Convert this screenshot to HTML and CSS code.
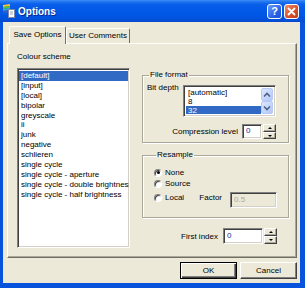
FILE: index.html
```html
<!DOCTYPE html>
<html lang="en">
<head>
    <meta charset="UTF-8">
    <title>Options</title>
    <link rel="stylesheet" href="styles.css">
</head>
<body>
    <div class="window">
        <!-- Заголовок окна -->
        <div class="titlebar">
            <svg class="app-icon" viewBox="0 0 12 14" width="12" height="14">
                <path d="M0 1 L7 0 L7 2 L0 3 Z" fill="#f2c531"/>
                <path d="M0 3 L7 2 L7 4 L0 5 Z" fill="#5cc13a"/>
                <path d="M0 5 L7 4 L7 6 L0 7 Z" fill="#33a3e0"/>
                <path d="M0 7 L5 6.3 L5 9 L0 9.5 Z" fill="#2a5fc8"/>
                <rect x="5.5" y="5.5" width="6" height="8" fill="#fff" stroke="#7a8aa8"/>
                <path d="M7 8 H10 M7 10 H10" stroke="#9aa6c0"/>
            </svg>
            <span class="title">Options</span>
            <span class="tbtn help">?</span>
            <span class="tbtn close">
                <svg viewBox="0 0 13 13" width="13" height="13">
                    <path d="M3.5 3.5 L9.5 9.5 M9.5 3.5 L3.5 9.5" stroke="#fff" stroke-width="1.8" stroke-linecap="round"/>
                </svg>
            </span>
        </div>

        <div class="client">
            <div class="tabs">
                <div class="tab active">Save Options</div>
                <div class="tab second">User Comments</div>
            </div>

            <div class="panel">
                <!-- Левая колонка: список схем -->
                <div class="col-left">
                    <div class="label">Colour scheme</div>
                    <div class="listbox schemes">
                        <div class="item selected">[default]</div>
                        <div class="item">[input]</div>
                        <div class="item">[local]</div>
                        <div class="item">bipolar</div>
                        <div class="item">greyscale</div>
                        <div class="item">ii</div>
                        <div class="item">junk</div>
                        <div class="item">negative</div>
                        <div class="item">schlieren</div>
                        <div class="item">single cycle</div>
                        <div class="item">single cycle - aperture</div>
                        <div class="item">single cycle - double brightness</div>
                        <div class="item">single cycle - half brightness</div>
                    </div>
                </div>

                <!-- Правая колонка -->
                <div class="col-right">
                    <fieldset class="group file-format">
                        <legend>File format</legend>
                        <div class="bit-row">
                            <span class="bit-label">Bit depth</span>
                            <div class="listbox bits">
                                <div class="bit-items">
                                    <div class="bit">[automatic]</div>
                                    <div class="bit">8</div>
                                    <div class="bit selected">32</div>
                                    <div class="bit">64</div>
                                </div>
                                <div class="vscroll">
                                    <span class="sb up">
                                        <svg viewBox="0 0 8 6" width="8" height="6"><path d="M1 4.5 L4 1.5 L7 4.5" fill="none" stroke="#4d6185" stroke-width="1.6"/></svg>
                                    </span>
                                    <span class="sb down">
                                        <svg viewBox="0 0 8 6" width="8" height="6"><path d="M1 1.5 L4 4.5 L7 1.5" fill="none" stroke="#4d6185" stroke-width="1.6"/></svg>
                                    </span>
                                </div>
                            </div>
                        </div>
                        <div class="spin-row comp-row">
                            <span>Compression level</span>
                            <span class="edit comp-edit">0</span>
                            <span class="spin-btns"><i class="spin-up"></i><i class="spin-down"></i></span>
                        </div>
                    </fieldset>

                    <fieldset class="group resample">
                        <legend>Resample</legend>
                        <div class="radio-row first">
                            <span class="radio checked"></span><span>None</span>
                        </div>
                        <div class="radio-row">
                            <span class="radio"></span><span>Source</span>
                        </div>
                        <div class="radio-row local">
                            <span class="radio"></span><span>Local</span>
                            <span class="factor-label">Factor</span>
                            <span class="edit factor-edit">0.5</span>
                        </div>
                    </fieldset>

                    <div class="spin-row first-row">
                        <span>First index</span>
                        <span class="edit first-edit">0</span>
                        <span class="spin-btns tall"><i class="spin-up"></i><i class="spin-down"></i></span>
                    </div>
                </div>
            </div>

            <div class="buttons">
                <button class="btn default">OK</button>
                <button class="btn">Cancel</button>
            </div>
        </div>
    </div>
</body>
</html>
```

FILE: styles.css
```css
/* Основные стили */
* {
    box-sizing: border-box;
}
body {
    margin: 0;
    background: #fff;
    font-family: "Liberation Sans", Arial, sans-serif;
    font-size: 8px;
    color: #000;
}
.window {
    width: 305px;
    height: 288px;
    background: #0853dc;
    display: flex;
    flex-direction: column;
}

/* Заголовок */
.titlebar {
    height: 22px;
    flex: none;
    display: flex;
    align-items: center;
    padding: 0 6px 0 3px;
    background: linear-gradient(#3d8ef7 0, #1f72f0 2px, #0a60e9 4px, #0359e8 9px, #0056e5 15px, #0051dd 19px, #0849cc 22px);
}
.app-icon {
    margin-right: 3px;
    flex: none;
}
.title {
    flex: 1;
    font-weight: bold;
    font-size: 10px;
    color: #fff;
    text-shadow: 1px 1px 0 #0b2a8a;
}
.tbtn {
    width: 15px;
    height: 15px;
    border: 1px solid #fff;
    border-radius: 3px;
    display: flex;
    align-items: center;
    justify-content: center;
    color: #fff;
    font-weight: bold;
    font-size: 11px;
}
.tbtn.help {
    background: linear-gradient(135deg, #6a9cfb, #2a62e8 60%, #1d4fd6);
    margin-right: 2px;
}
.tbtn.close {
    background: linear-gradient(135deg, #ee8d6a, #d9522c 55%, #bf3b18);
}

/* Клиентская область */
.client {
    flex: 1;
    margin: 0 5px 5px 3px;
    background: #ece9d8;
    padding: 4px 3px 4px 4px;
    display: flex;
    flex-direction: column;
}
.tabs {
    height: 17px;
    flex: none;
    display: flex;
    align-items: flex-end;
    padding-left: 2px;
}
.tab {
    height: 15px;
    line-height: 13px;
    text-align: center;
    border: 1px solid;
    border-bottom: none;
    border-color: #fff #716f64 transparent #fff;
    border-radius: 2px 2px 0 0;
}
.tab.active {
    width: 57px;
    height: 18px;
    line-height: 16px;
    margin-bottom: -1px;
    background: #ece9d8;
    position: relative;
    z-index: 1;
}
.tab.second {
    width: 64px;
}

.panel {
    height: 215px;
    flex: none;
    border: 1px solid;
    border-color: #fff #716f64 #716f64 #fff;
    box-shadow: inset -1px -1px 0 #aca899;
    display: grid;
    grid-template-columns: 113px 147px;
    column-gap: 12px;
    align-items: start;
    padding: 8px 0 0 9px;
}

.label {
    line-height: 10px;
}
.listbox {
    background: #fff;
    border: 1px solid;
    border-color: #808080 #fff #fff #808080;
    box-shadow: inset 1px 1px 0 #404040, inset -1px -1px 0 #d4d0c8;
    overflow: hidden;
}
.schemes {
    margin-top: 6px;
    height: 180px;
    padding: 2px 1px 1px 1px;
}
.item {
    line-height: 9.9px;
    height: 9.9px;
    padding-left: 2px;
    white-space: nowrap;
}
.selected {
    background: #316ac5;
    color: #fff;
}

/* Группы */
.group {
    margin: 0;
    min-width: 0;
    border: 1px solid #aca899;
    box-shadow: inset 1px 1px 0 #fff, 1px 1px 0 #fff;
}
.group legend {
    padding: 0 1px;
    margin-left: 2px;
    line-height: 10px;
}
.file-format {
    margin-top: 18px;
    padding: 0 12px 3px 4px;
}
.bit-row {
    display: flex;
    align-items: flex-start;
    margin-top: 5px;
}
.bit-label {
    margin-top: -2px;
    line-height: 10px;
}
.bits {
    margin-left: auto;
    width: 93px;
    height: 32px;
    padding: 2px 2px 2px 2px;
    display: flex;
}
.bit-items {
    flex: 1;
    overflow: hidden;
}
.bit {
    height: 9px;
    line-height: 9px;
    padding-left: 2px;
}
.vscroll {
    width: 12px;
    display: flex;
    flex-direction: column;
}
.sb {
    height: 14px;
    display: flex;
    align-items: center;
    justify-content: center;
    border: 1px solid #b7c9f5;
    border-radius: 2px;
    background: linear-gradient(135deg, #dde7fe, #c3d4fc 60%, #b4c8f7);
}

.spin-row {
    display: flex;
    align-items: center;
    justify-content: flex-end;
}
.comp-row {
    margin-top: 7px;
    height: 15px;
}
.edit {
    background: #fff;
    border: 1px solid;
    border-color: #808080 #fff #fff #808080;
    box-shadow: inset 1px 1px 0 #404040, inset -1px -1px 0 #d4d0c8;
    padding-left: 3px;
    color: #1b2a8f;
    line-height: 12px;
}
.comp-edit {
    width: 20px;
    height: 15px;
    margin-left: 4px;
}
.spin-btns {
    width: 13px;
    height: 15px;
    margin-left: 1px;
    display: flex;
    flex-direction: column;
}
.spin-btns.tall {
    height: 16px;
}
.spin-btns i {
    flex: 1;
    position: relative;
    background: #ece9d8;
    border: 1px solid;
    border-color: #fff #404040 #404040 #fff;
    box-shadow: inset -1px -1px 0 #aca899;
}
.spin-btns i::after {
    content: "";
    position: absolute;
    left: 4px;
    width: 0;
    height: 0;
    border-left: 2px solid transparent;
    border-right: 2px solid transparent;
}
.spin-up::after {
    top: 2px;
    border-bottom: 2px solid #000;
}
.spin-down::after {
    top: 2px;
    border-top: 2px solid #000;
}

.resample {
    margin-top: 7px;
    padding: 0 11px 9px 11px;
}
.radio-row {
    display: flex;
    align-items: center;
    height: 11px;
    line-height: 11px;
}
.radio-row.first {
    margin-top: 7px;
}
.radio {
    width: 8px;
    height: 8px;
    margin-right: 3px;
    border-radius: 50%;
    background: #fff;
    border: 1px solid;
    border-color: #808080 #fff #fff #808080;
    box-shadow: inset 1px 1px 0 #404040;
    display: flex;
    align-items: center;
    justify-content: center;
}
.radio.checked::after {
    content: "";
    width: 3px;
    height: 3px;
    border-radius: 50%;
    background: #000;
}
.radio-row.local {
    height: 19px;
    align-items: flex-start;
}
.radio-row.local .radio {
    margin-top: 4.5px;
}
.radio-row.local span {
    margin-top: 3px;
}
.factor-label {
    margin-left: auto;
}
.radio-row.local .factor-edit {
    width: 47px;
    height: 16px;
    margin-left: 8px;
    background: #ece9d8;
    color: #aca899;
    line-height: 14px;
}

.first-row {
    margin-top: 10px;
    padding-right: 12px;
    height: 16px;
}
.first-edit {
    width: 40px;
    height: 16px;
    margin-left: 5px;
    line-height: 13px;
}

/* Кнопки диалога */
.buttons {
    margin-top: 4px;
    display: flex;
    justify-content: flex-end;
    gap: 3px;
}
.btn {
    width: 57px;
    height: 17px;
    padding: 0;
    font-family: inherit;
    font-size: 8px;
    color: #000;
    background: #ece9d8;
    border: 1px solid;
    border-color: #fff #404040 #404040 #fff;
    box-shadow: inset -1px -1px 0 #808080;
}
.btn.default {
    border: 1px solid #000;
    box-shadow: inset 1px 1px 0 #fff, inset -1px -1px 0 #404040, inset -2px -2px 0 #808080;
}
```
